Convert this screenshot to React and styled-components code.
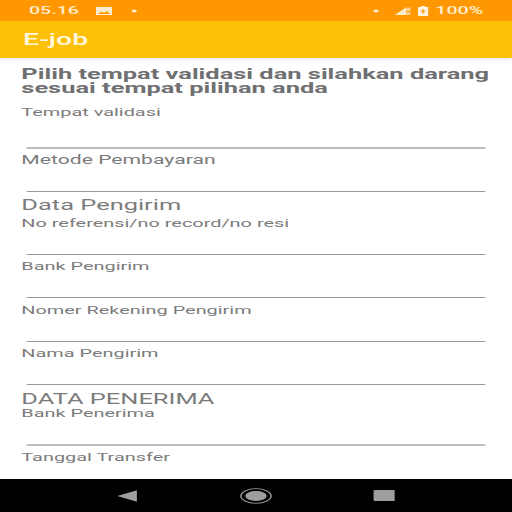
import React from "react";
import styled, { createGlobalStyle } from "styled-components";

const GlobalStyle = createGlobalStyle`
  html, body {
    margin: 0;
    padding: 0;
    background: #ffffff;
  }
  * {
    box-sizing: border-box;
  }
`;

const fields = [
  { type: "field", label: "Tempat validasi", gap: 27, light: true },
  { type: "field", label: "Metode Pembayaran", gap: 23, size: 11.9 },
  { type: "section", label: "Data Pengirim", height: 19.5 },
  { type: "field", label: "No referensi/no record/no resi", gap: 23 },
  { type: "field", label: "Bank Pengirim", gap: 23 },
  { type: "field", label: "Nomer Rekening Pengirim", gap: 23 },
  { type: "field", label: "Nama Pengirim", gap: 23 },
  { type: "section", label: "DATA PENERIMA", height: 16.5 },
  { type: "field", label: "Bank Penerima", gap: 23, light: true },
];

const Dot = () => (
  <svg width="3" height="4" viewBox="0 0 3 4">
    <ellipse cx="1.500" cy="2" rx="1.500" ry="1.500" fill="#ffeccd" />
  </svg>
);

const App = () => {
  return (
    <Screen>
      <GlobalStyle />
      <StatusBar>
        <StatusGroup>
          <StatusText>05.16</StatusText>
          <PushedIcon $left={6}>
            <svg width="9" height="8" viewBox="0 0 9 8">
              <rect width="9" height="8" rx="0.600" fill="#ffeccd" />
              <path d="M1 7 L3 4.500 L4.500 6 L6 4 L8 7 Z" fill="#ff9800" />
            </svg>
          </PushedIcon>
          <PushedIcon $left={7}>
            <Dot />
          </PushedIcon>
        </StatusGroup>
        <StatusGroup>
          <Dot />
          <PushedIcon $left={5}>
            <svg width="9" height="8" viewBox="0 0 9 8">
              <path d="M0 8 L6.500 0.500 V8 Z" fill="#ffeccd" />
              <path d="M6.500 0.500 H9 V4 H6.500 Z M6.500 5 H9 V8 H6.500 Z" fill="#ffcf8c" />
            </svg>
          </PushedIcon>
          <svg width="6" height="10" viewBox="0 0 6 10">
            <path d="M1.800 0 H4.200 V1 H6 V10 H0 V1 H1.800 Z" fill="#fff3e0" />
            <path d="M3.500 2.500 L1.500 5.800 H2.800 L2.400 8.200 L4.500 4.800 H3.100 Z" fill="#ff9800" />
          </svg>
          <StatusText>100%</StatusText>
        </StatusGroup>
      </StatusBar>
      <AppBar>
        <AppTitle>E-job</AppTitle>
      </AppBar>
      <Content>
        <Intro>
          <IntroLine>Pilih tempat validasi dan silahkan darang</IntroLine>
          <IntroLine>sesuai tempat pilihan anda</IntroLine>
        </Intro>
        {fields.map((item) =>
          item.type === "section" ? (
            <SectionTitle key={item.label} $height={item.height}>
              {item.label}
            </SectionTitle>
          ) : (
            <Field key={item.label}>
              <FieldLabel $size={item.size}>{item.label}</FieldLabel>
              <Underline $gap={item.gap} $light={item.light} />
            </Field>
          )
        )}
        <FieldLabel>Tanggal Transfer</FieldLabel>
      </Content>
      <NavBar>
        <svg width="11.500" height="12" viewBox="0 0 11.500 12">
          <path d="M0 6 L11.500 0 V12 Z" fill="#9e9e9e" />
        </svg>
        <svg width="18" height="16" viewBox="0 0 18 16">
          <ellipse cx="9" cy="8" rx="8.500" ry="7.300" fill="none" stroke="#9e9e9e" strokeWidth="0.800" />
          <ellipse cx="9" cy="8" rx="6" ry="5" fill="#9e9e9e" />
        </svg>
        <svg width="12.400" height="11" viewBox="0 0 12.400 11">
          <rect width="12.400" height="11" rx="1" fill="#9e9e9e" />
        </svg>
      </NavBar>
    </Screen>
  );
};

export default App;

// the reference is a tall phone shot squeezed to a square, so the page is
// built at 288px wide and stretched back out
const Screen = styled.div`
  width: 288px;
  height: 512px;
  display: flex;
  flex-direction: column;
  overflow: hidden;
  background: #ffffff;
  font-family: Roboto, "Liberation Sans", sans-serif;
  transform: scaleX(1.7778);
  transform-origin: 0 0;
`;

const StatusBar = styled.div`
  height: 21px;
  flex: none;
  display: flex;
  align-items: center;
  justify-content: space-between;
  padding: 0 16.300px;
  background: #ff9800;
`;

const StatusGroup = styled.div`
  display: flex;
  align-items: center;
  gap: 4px;
`;

const PushedIcon = styled.div`
  display: flex;
  margin-left: ${(props) => props.$left}px;
`;

const StatusText = styled.span`
  font-size: 11px;
  line-height: 12px;
  font-weight: 500;
  color: #ffeccd;
`;

const AppBar = styled.div`
  height: 37px;
  flex: none;
  display: flex;
  align-items: center;
  padding-left: 13px;
  background: #ffc107;
  box-shadow: 0 1px 2px rgba(0, 0, 0, 0.12);
`;

const AppTitle = styled.div`
  font-size: 16px;
  line-height: 20px;
  font-weight: 500;
  color: #fff8e1;
`;

const Content = styled.div`
  flex: 1;
  padding: 9px 15.200px 0 12px;
  overflow: hidden;
`;

const Intro = styled.div`
  margin-bottom: 9px;
`;

const IntroLine = styled.div`
  height: 14px;
  font-size: 14.300px;
  line-height: 14px;
  font-weight: 700;
  color: #6f7072;
  white-space: nowrap;
`;

const Field = styled.div`
  display: flex;
  flex-direction: column;
  margin-bottom: 3.500px;
`;

const FieldLabel = styled.div`
  height: 16px;
  font-size: ${(props) => props.$size || 11.2}px;
  line-height: 17.500px;
  color: #7b7b7b;
  white-space: nowrap;
`;

const Underline = styled.div`
  height: ${(props) => (props.$light ? 1.5 : 1)}px;
  margin: ${(props) => props.$gap}px 0 ${(props) => (props.$light ? -0.5 : 0)}px 3.200px;
  background: ${(props) => (props.$light ? "#bdbdbd" : "#9a9a9a")};
`;

const SectionTitle = styled.div`
  height: ${(props) => props.$height}px;
  font-size: 14.300px;
  line-height: 21px;
  color: #7b7b7b;
  white-space: nowrap;
`;

const NavBar = styled.div`
  height: 33px;
  flex: none;
  display: flex;
  align-items: center;
  justify-content: space-between;
  padding: 0 65.800px;
  background: #000000;
`;
